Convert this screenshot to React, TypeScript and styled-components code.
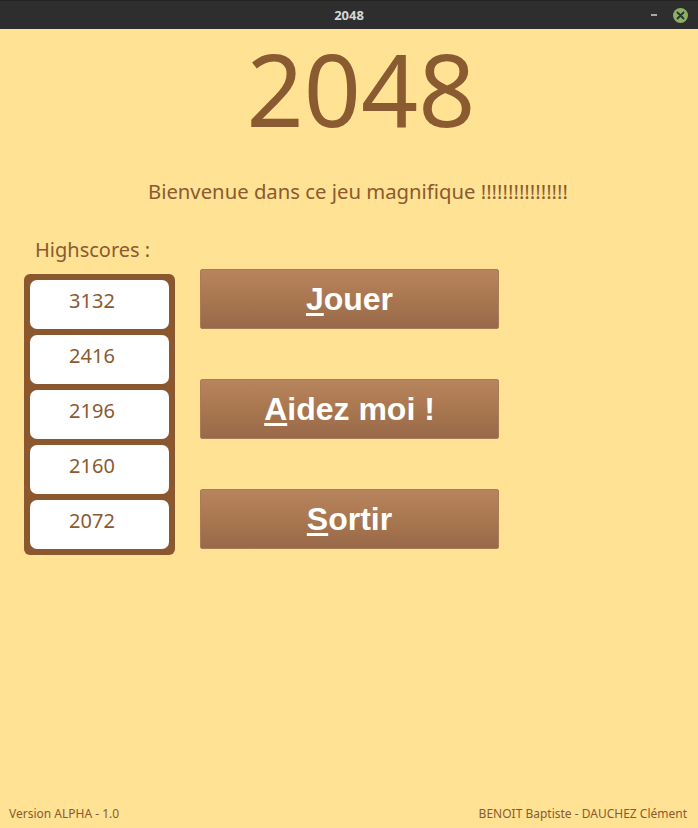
import React from "react";
import styled, { createGlobalStyle } from "styled-components";

const Global = createGlobalStyle`
  html, body { margin: 0; padding: 0; }
  body { background: #ffe294; font-family: "Noto Sans", "Open Sans", sans-serif; }
`;

const BROWN = "#8a5a30";

const Window = styled.div`
  display: flex;
  flex-direction: column;
  min-height: 100vh;
  background: #ffe294;
`;

const TitleBar = styled.div`
  height: 29px;
  background: #2e2e2e;
  display: flex;
  align-items: center;
  justify-content: center;
  position: relative;
  border-top: 1px solid #222;
  box-sizing: border-box;
`;

const TitleText = styled.span`
  color: #d6d6d6;
  font-family: "Noto Sans", sans-serif;
  font-weight: 700;
  font-size: 13px;
  line-height: 16px;
`;

const Controls = styled.div`
  position: absolute;
  right: 10px;
  top: 0;
  height: 100%;
  display: flex;
  align-items: center;
  gap: 16px;
`;

const MinButton = styled.span`
  width: 6px;
  height: 2px;
  background: #a8a8a8;
`;

const CloseButton = styled.span`
  width: 15px;
  height: 15px;
  border-radius: 50%;
  background: #8bb064;
  display: flex;
  align-items: center;
  justify-content: center;
`;

const Header = styled.div`
  padding-left: 24px;
  display: flex;
  flex-direction: column;
  align-items: center;
`;

const BigTitle = styled.h1`
  margin: 9px 0 0;
  font-family: "Noto Sans", sans-serif;
  font-weight: 400;
  font-size: 100px;
  line-height: 1;
  color: ${BROWN};
`;

const Subtitle = styled.p`
  margin: 40px 6px 0 0;
  font-size: 20.3px;
  line-height: 26px;
  color: ${BROWN};
`;

const Content = styled.div`
  display: flex;
  align-items: flex-start;
  margin-top: 34px;
  padding-left: 24px;
  gap: 25px;
`;

const ScoresColumn = styled.div`
  display: flex;
  flex-direction: column;
`;

const ScoresLabel = styled.div`
  padding-left: 11px;
  font-size: 20px;
  line-height: 24px;
  color: ${BROWN};
  margin-bottom: 12px;
`;

const ScoresPanel = styled.div`
  width: 151px;
  box-sizing: border-box;
  background: #8b572e;
  border-radius: 6px;
  padding: 6px;
  display: flex;
  flex-direction: column;
  gap: 6px;
`;

const ScoreBox = styled.div`
  height: 49px;
  background: #ffffff;
  border-radius: 7px;
  box-sizing: border-box;
  padding: 8px 15px 0 0;
  text-align: center;
  font-size: 20px;
  line-height: 26px;
  color: ${BROWN};
`;

const ButtonsColumn = styled.div`
  display: flex;
  flex-direction: column;
  gap: 50px;
  margin-top: 31px;
`;

const MenuButton = styled.button`
  width: 299px;
  height: 60px;
  box-sizing: border-box;
  border: 1px solid #a77c57;
  border-radius: 2px;
  background: linear-gradient(to bottom, #b7845e 0%, #a9774f 50%, #98694a 100%);
  color: #ffffff;
  font-family: "Liberation Sans", Arial, sans-serif;
  font-weight: 700;
  font-size: 32px;
  line-height: 58px;
  padding: 0;
  cursor: pointer;
  text-align: center;
`;

const Mnemonic = styled.span`
  text-decoration: underline;
  text-decoration-thickness: 3px;
  text-underline-offset: 3px;
`;

const Footer = styled.div`
  margin-top: auto;
  display: flex;
  justify-content: space-between;
  padding: 0 11px 6px 9px;
  font-size: 12px;
  line-height: 16px;
  color: ${BROWN};
`;

const scores = [3132, 2416, 2196, 2160, 2072];

const buttons: { key: string; rest: string }[] = [
  { key: "J", rest: "ouer" },
  { key: "A", rest: "idez moi !" },
  { key: "S", rest: "ortir" },
];

export default function App() {
  return (
    <>
      <Global />
      <Window>
        <TitleBar>
          <TitleText>2048</TitleText>
          <Controls>
            <MinButton />
            <CloseButton>
              <svg width="9" height="9" viewBox="0 0 9 9">
                <path d="M1.5 1.5 L7.5 7.5 M7.5 1.5 L1.5 7.5" stroke="#2e2e2e" strokeWidth="1.8" strokeLinecap="round" />
              </svg>
            </CloseButton>
          </Controls>
        </TitleBar>
        <Header>
          <BigTitle>2048</BigTitle>
          <Subtitle>Bienvenue dans ce jeu magnifique !!!!!!!!!!!!!!!!</Subtitle>
        </Header>
        <Content>
          <ScoresColumn>
            <ScoresLabel>Highscores :</ScoresLabel>
            <ScoresPanel>
              {scores.map((s) => (
                <ScoreBox key={s}>{s}</ScoreBox>
              ))}
            </ScoresPanel>
          </ScoresColumn>
          <ButtonsColumn>
            {buttons.map((b) => (
              <MenuButton key={b.key}>
                <Mnemonic>{b.key}</Mnemonic>
                {b.rest}
              </MenuButton>
            ))}
          </ButtonsColumn>
        </Content>
        <Footer>
          <span>Version ALPHA - 1.0</span>
          <span>BENOIT Baptiste - DAUCHEZ Clément</span>
        </Footer>
      </Window>
    </>
  );
}
